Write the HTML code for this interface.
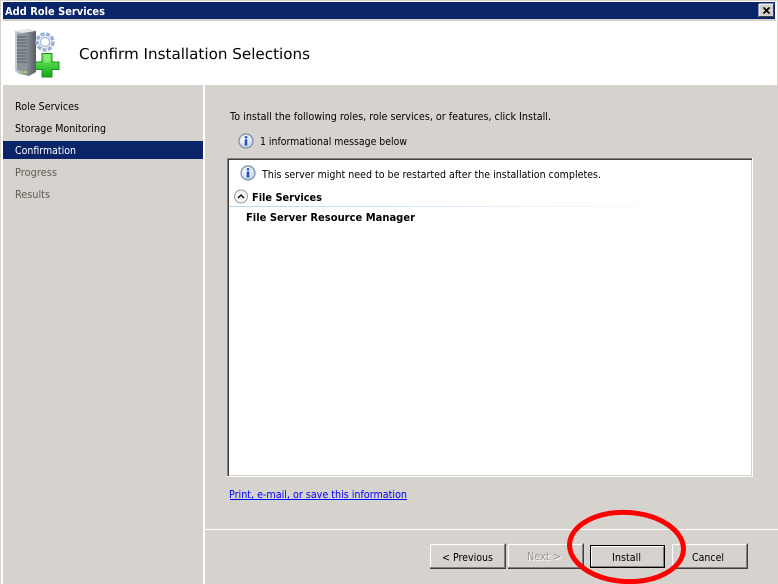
<!DOCTYPE html>
<html><head><meta charset="utf-8"><style>
html,body{margin:0;padding:0;background:#d6d3ce}
svg{display:block}
text{font-family:"DejaVu Sans","Liberation Sans",sans-serif;font-size:11px;fill:#000}
</style></head><body>
<svg width="778" height="584" viewBox="0 0 778 584" xmlns="http://www.w3.org/2000/svg" shape-rendering="crispEdges">
<defs>
<linearGradient id="ln"><stop offset="0" stop-color="#bcd8f4"/><stop offset=".6" stop-color="#e4eefa"/><stop offset="1" stop-color="#fff"/></linearGradient>
<linearGradient id="sv" x1="0" x2="1"><stop offset="0" stop-color="#c8cdd2"/><stop offset=".55" stop-color="#8a929a"/><stop offset="1" stop-color="#555b62"/></linearGradient>
<radialGradient id="ic" cx=".4" cy=".35" r=".7"><stop offset="0" stop-color="#fff"/><stop offset="1" stop-color="#c4d2e8"/></radialGradient>
<linearGradient id="gr" x1="0" y1="0" x2="0" y2="1"><stop offset="0" stop-color="#7ef06a"/><stop offset="1" stop-color="#12a818"/></linearGradient>
<g id="info" shape-rendering="auto"><circle cx="0" cy="0" r="7" fill="url(#ic)" stroke="#7d8ca4" stroke-width="1.2"/><rect x="-1.3" y="-4.8" width="2.6" height="2.2" fill="#2050c0"/><rect x="-1.3" y="-1.6" width="2.6" height="6.2" fill="#2050c0"/></g>
</defs>

<rect width="778" height="584" fill="#d6d3ce"/>
<rect x="1" y="1" width="776" height="583" fill="#fff"/>
<rect x="3" y="2" width="772" height="18" fill="#d6d3ce"/>
<rect x="3" y="2" width="772" height="17" fill="#0a246a"/>
<rect x="3" y="19" width="773" height="2" fill="#d6d3ce"/>
<rect x="3" y="21" width="773" height="64" fill="#fff"/>
<rect x="3" y="85" width="200" height="499" fill="#d6d3ce"/>
<rect x="205" y="85" width="573" height="499" fill="#d6d3ce"/>
<rect x="3" y="141" width="200" height="18" fill="#0a246a"/>

<text x="5" y="15" font-weight="bold" style="fill:#fff" textLength="100" lengthAdjust="spacingAndGlyphs" text-rendering="geometricPrecision">Add Role Services</text>

<!-- close -->
<rect x="759" y="4" width="15" height="13" fill="#d6d3ce"/>
<path d="M759 4h15M759 4v13" stroke="#fff" fill="none"/>
<path d="M759 16.500h15M773.500 4v13" stroke="#404040" fill="none"/>
<path d="M763 7.500l6 6M764 7.500l6 6M769 7.500l-6 6M770 7.500l-6 6" stroke="#000" fill="none" shape-rendering="auto" stroke-width="1.1"/>

<!-- header icon -->
<g shape-rendering="auto">
<path d="M15 31l14-2 7 2v41l-7 4-10-2-4-3z" fill="url(#sv)"/>
<path d="M15 31l14-2 7 2-14 2z" fill="#e6e9ec"/>
<path d="M17 34l10-1v39l-10-2z" fill="#8d959d"/>
<path d="M17 37h10M17 40h10M17 43h10M17 46h10M17 50h10M17 53h10M17 56h10M17 59h10M17 62h10" stroke="#555c64" stroke-width="1"/>
<rect x="24" y="71" width="3" height="2" fill="#9adf40"/>
<circle cx="45" cy="42" r="8" fill="#e6edf8" stroke="#9ab0d0" stroke-width="3.500" stroke-dasharray="4 1.500"/>
<circle cx="45" cy="42" r="4.500" fill="#fff" stroke="#9cb0cc"/>
<path d="M42 53.500h10v8.500h7v7.500h-7v7.500h-10v-7.500h-6.500v-7.500h6.500z" fill="url(#gr)" stroke="#1c8c22" stroke-width="1"/>
<path d="M44 55.500h6v7h-6z" fill="#a4f48c" opacity=".55"/>
</g>

<text x="79" y="59" style="font-size:15px" textLength="231" lengthAdjust="spacingAndGlyphs" text-rendering="geometricPrecision">Confirm Installation Selections</text>

<!-- nav -->
<text x="15" y="110" textLength="64" lengthAdjust="spacingAndGlyphs">Role Services</text>
<text x="15" y="132" textLength="91" lengthAdjust="spacingAndGlyphs">Storage Monitoring</text>
<text x="15" y="154" style="fill:#fff" textLength="61" lengthAdjust="spacingAndGlyphs">Confirmation</text>
<text x="15" y="176" style="fill:#5e5b54" textLength="42" lengthAdjust="spacingAndGlyphs">Progress</text>
<text x="15" y="198" style="fill:#5e5b54" textLength="35" lengthAdjust="spacingAndGlyphs">Results</text>

<!-- content -->
<text x="230" y="120" textLength="321" lengthAdjust="spacingAndGlyphs">To install the following roles, role services, or features, click Install.</text>
<use href="#info" x="246" y="141"/>
<text x="260" y="145" textLength="147" lengthAdjust="spacingAndGlyphs">1 informational message below</text>

<!-- list box -->
<rect x="227" y="158" width="526" height="319" fill="#fff"/>
<rect x="227" y="158" width="525" height="1" fill="#808080"/>
<rect x="228" y="159" width="524" height="1" fill="#404040"/>
<rect x="227" y="158" width="1" height="318" fill="#808080"/>
<rect x="228" y="159" width="1" height="317" fill="#404040"/>
<rect x="752" y="158" width="1" height="319" fill="#fff"/>
<rect x="227" y="476" width="526" height="1" fill="#fff"/>
<rect x="229" y="475" width="523" height="1" fill="#d6d3ce"/>
<rect x="751" y="160" width="1" height="316" fill="#d6d3ce"/>

<use href="#info" x="248" y="173"/>
<text x="262" y="178" textLength="339" lengthAdjust="spacingAndGlyphs">This server might need to be restarted after the installation completes.</text>

<g shape-rendering="auto">
<circle cx="241" cy="196.500" r="6.500" fill="#f4f4f4" stroke="#9a9a9a"/>
<path d="M238 198l3-3 3 3" fill="none" stroke="#000" stroke-width="1.300"/>
</g>
<text x="252" y="201" font-weight="bold" textLength="70" lengthAdjust="spacingAndGlyphs">File Services</text>
<rect x="229" y="206" width="455" height="1" fill="url(#ln)"/>
<text x="246" y="221" font-weight="bold" textLength="169" lengthAdjust="spacingAndGlyphs">File Server Resource Manager</text>

<text x="229" y="498" style="fill:#0000ff" textLength="178" lengthAdjust="spacingAndGlyphs">Print, e-mail, or save this information</text>
<rect x="230" y="499" width="177" height="1" fill="#0000ff"/>

<rect x="205" y="529" width="573" height="1" fill="#fff"/>

<!-- buttons -->
<g fill="none">
<path d="M430.500 568v-23.500h74" stroke="#fff"/>
<path d="M430 567.500h74.500v-23" stroke="#808080"/>
<path d="M430 568.500h75.500v-25" stroke="#404040"/>
<path d="M508.500 568v-23.500h74" stroke="#fff"/>
<path d="M508 567.500h74.500v-23" stroke="#808080"/>
<path d="M508 568.500h75.500v-25" stroke="#404040"/>
<rect x="590.500" y="545.500" width="74" height="22" stroke="#000"/>
<path d="M591.500 567v-20.500h72" stroke="#fff"/>
<path d="M591 566.500h72.500v-20" stroke="#808080"/>
<path d="M672.500 568v-23.500h74" stroke="#fff"/>
<path d="M672 567.500h74.500v-23" stroke="#808080"/>
<path d="M672 568.500h75.500v-25" stroke="#404040"/>
</g>
<text x="442" y="561" textLength="51" lengthAdjust="spacingAndGlyphs">&lt; Previous</text>
<text x="528" y="561" style="fill:#fff" textLength="34" lengthAdjust="spacingAndGlyphs">Next &gt;</text>
<text x="527" y="560" style="fill:#9a978f" textLength="34" lengthAdjust="spacingAndGlyphs">Next &gt;</text>
<text x="612" y="561" textLength="29" lengthAdjust="spacingAndGlyphs">Install</text>
<text x="692" y="561" textLength="32" lengthAdjust="spacingAndGlyphs">Cancel</text>

<ellipse cx="626.500" cy="547" rx="57" ry="34.500" fill="none" stroke="#ff0000" stroke-width="5" shape-rendering="auto" transform="rotate(3 626.500 547)"/>
</svg>
</body></html>
